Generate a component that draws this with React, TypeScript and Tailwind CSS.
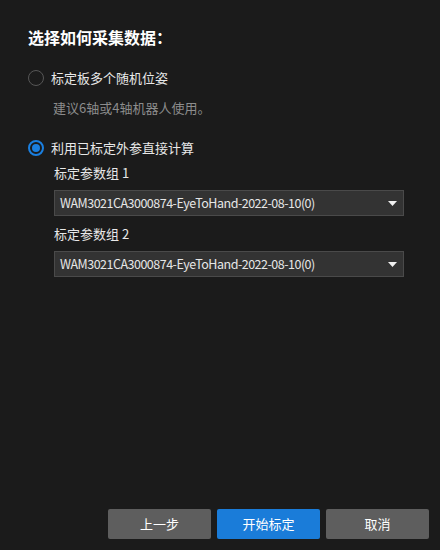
import { useState } from "react";

const FONT = { fontFamily: '"Microsoft YaHei", "Noto Sans CJK SC", "Noto Sans", sans-serif' };

const OPTIONS = ["WAM3021CA3000874-EyeToHand-2022-08-10(0)"];

function Radio({ checked }: { checked: boolean }) {
  if (checked) {
    return (
      <span className="flex h-4 w-4 shrink-0 items-center justify-center rounded-full border-2 border-[#1a7fe0]">
        <span className="h-[8px] w-[8px] rounded-full bg-[#1a7fe0]" />
      </span>
    );
  }
  return <span className="h-4 w-4 shrink-0 rounded-full border-[1.5px] border-[#565656]" />;
}

function Select({ value }: { value: string }) {
  return (
    <div className="flex h-[26px] w-[350px] items-center justify-between border border-[#4a4a4a] bg-[#333333] pl-[5px] pr-[6px]">
      <span className="text-[12.5px] tracking-[-0.5px] text-[#e6e6e6]">{value}</span>
      <svg width="9" height="5" viewBox="0 0 9 5">
        <path d="M0 0h9L4.5 5z" fill="#f0f0f0" />
      </svg>
    </div>
  );
}

export default function App() {
  const [mode, setMode] = useState<"board" | "extrinsic">("extrinsic");

  return (
    <div style={FONT} className="flex h-[550px] w-[440px] flex-col bg-[#1b1b1b] text-[#e8e8e8]">
      <div className="flex flex-1 flex-col px-7 pt-[25px]">
        <h1 className="text-[16px] font-bold leading-6 text-white">选择如何采集数据：</h1>

        <button
          type="button"
          onClick={() => setMode("board")}
          className="mt-[19px] flex items-center gap-[7px] text-left"
        >
          <Radio checked={mode === "board"} />
          <span className="text-[13px] leading-5">标定板多个随机位姿</span>
        </button>
        <p className="ml-[25px] mt-[10px] text-[13px] leading-5 text-[#8c8c8c]">建议6轴或4轴机器人使用。</p>

        <button
          type="button"
          onClick={() => setMode("extrinsic")}
          className="mt-[20px] flex items-center gap-[7px] text-left"
        >
          <Radio checked={mode === "extrinsic"} />
          <span className="text-[13px] leading-5">利用已标定外参直接计算</span>
        </button>

        <div className="ml-[26px] mt-[5px] flex flex-col">
          <span className="text-[13px] leading-5">标定参数组 1</span>
          <div className="mt-[7px]">
            <Select value={OPTIONS[0]} />
          </div>
          <span className="mt-[8px] text-[13px] leading-5">标定参数组 2</span>
          <div className="mt-[7px]">
            <Select value={OPTIONS[0]} />
          </div>
        </div>
      </div>

      <div className="flex justify-end gap-[6px] pb-[11px] pr-[11px]">
        <button type="button" className="h-[30px] w-[103px] rounded-[2px] bg-[#5e5e5e] text-[13px] text-white">
          上一步
        </button>
        <button type="button" className="h-[30px] w-[103px] rounded-[2px] bg-[#1a7cd9] text-[13px] text-white">
          开始标定
        </button>
        <button type="button" className="h-[30px] w-[103px] rounded-[2px] bg-[#5e5e5e] text-[13px] text-white">
          取消
        </button>
      </div>
    </div>
  );
}
